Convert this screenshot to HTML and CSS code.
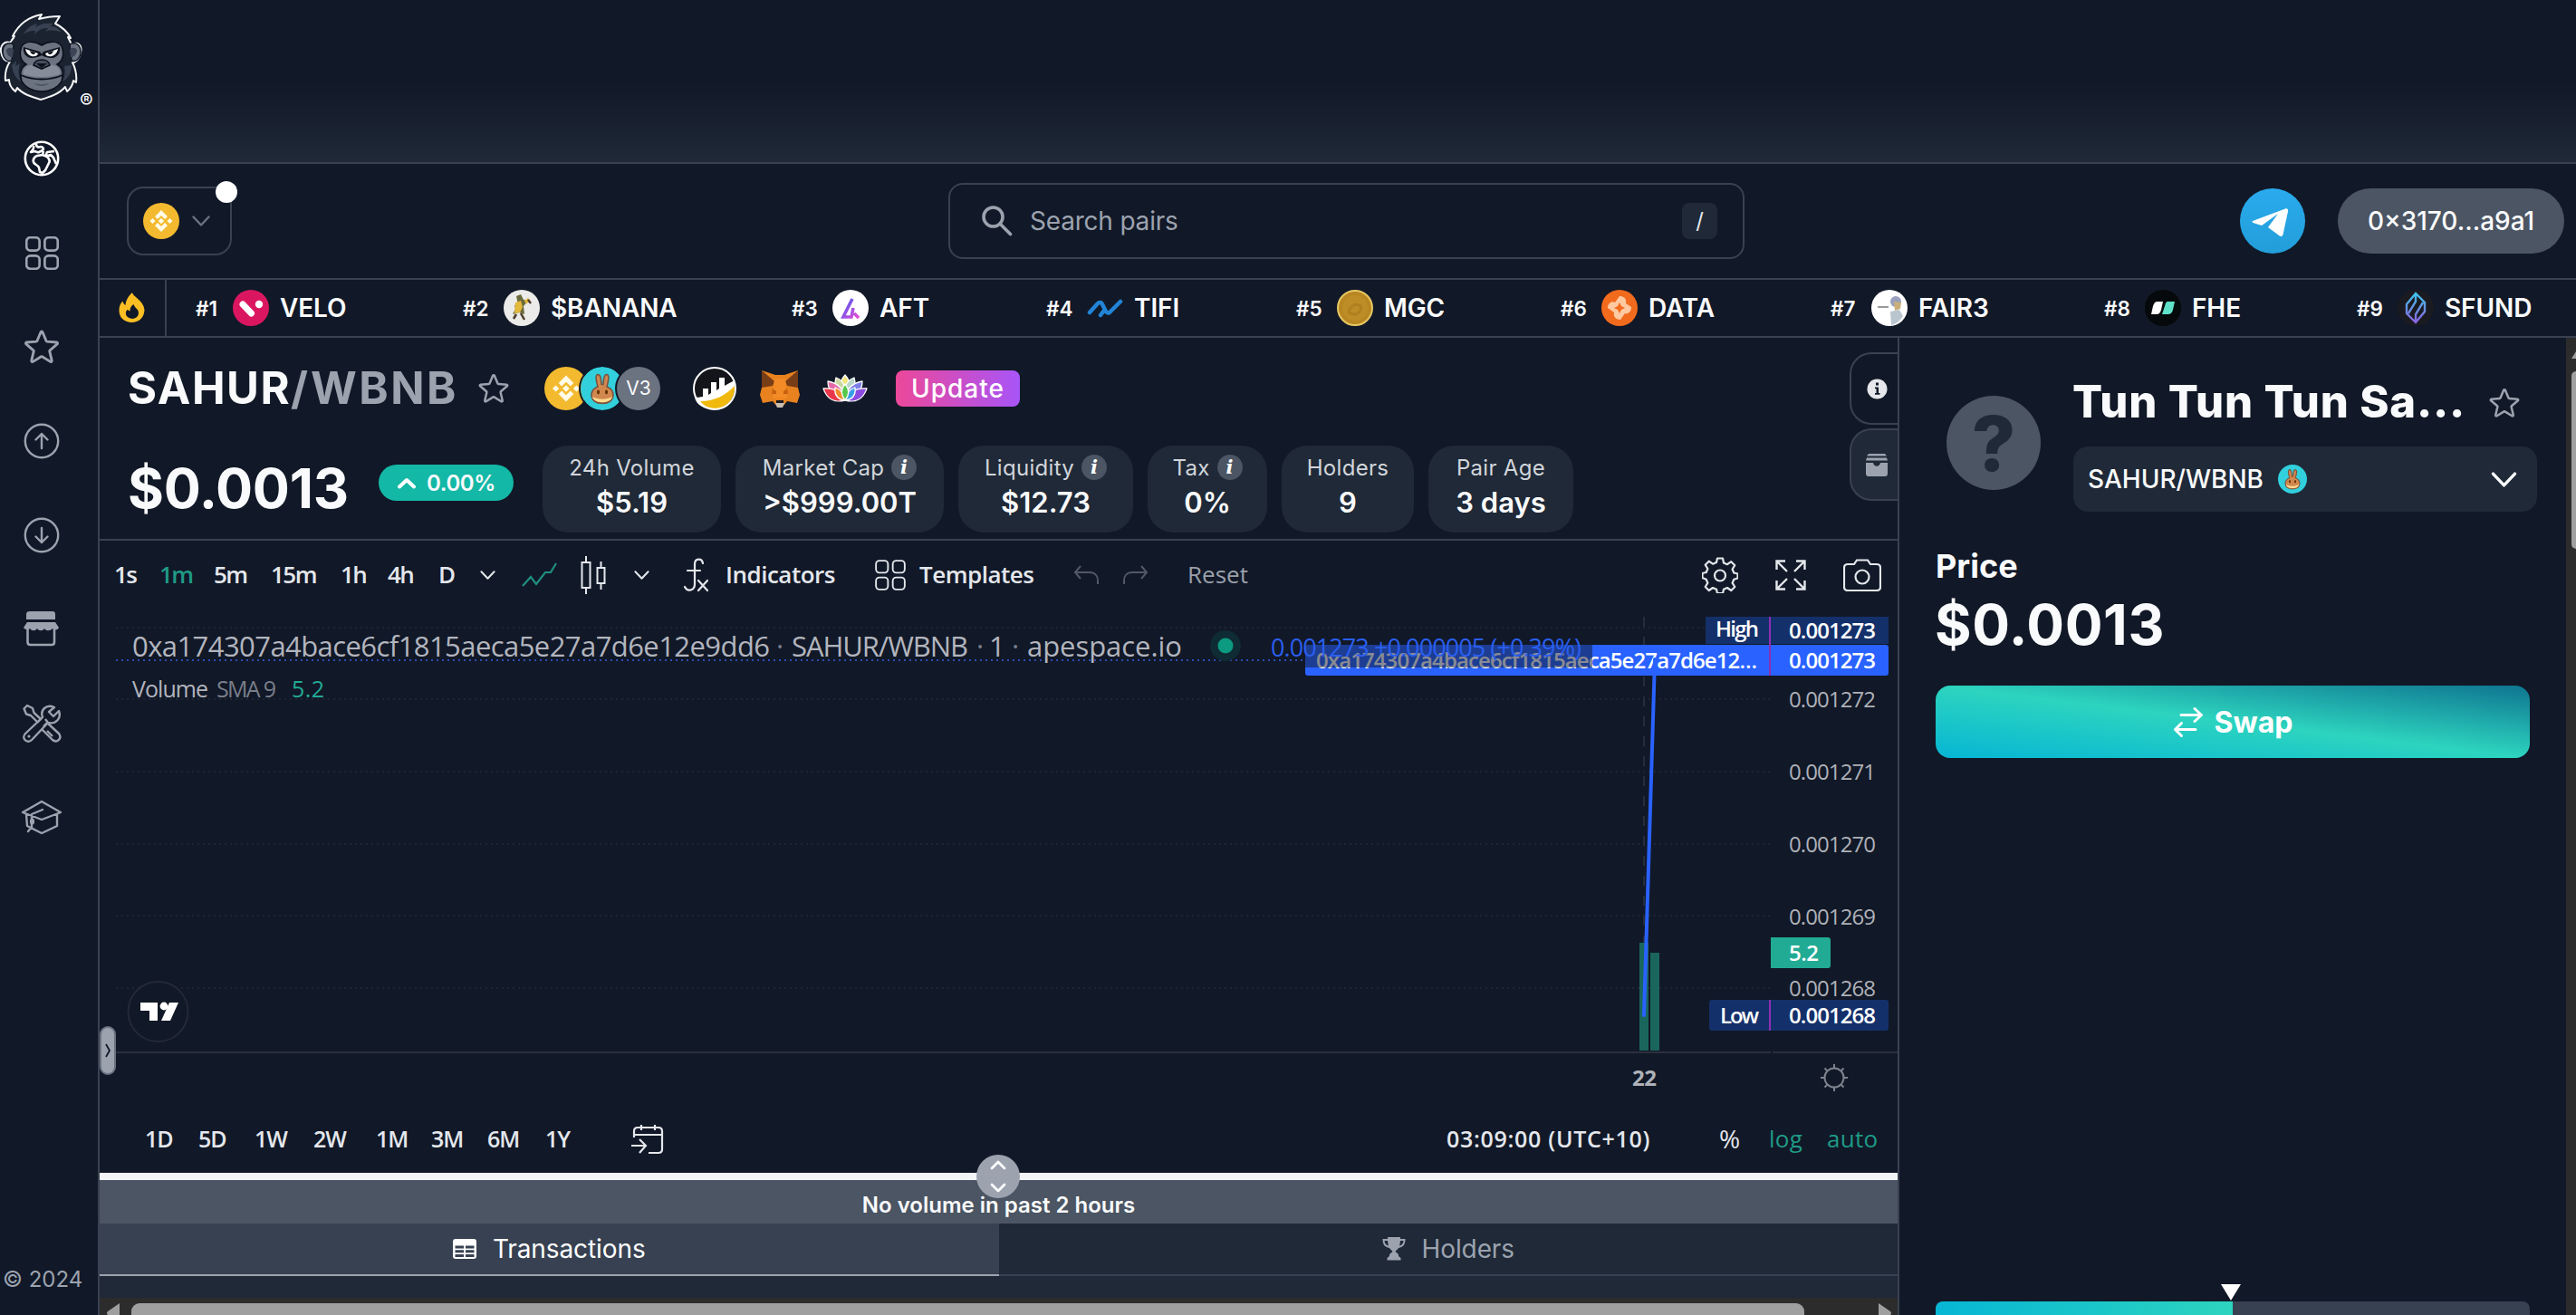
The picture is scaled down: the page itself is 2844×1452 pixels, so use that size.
FILE: index.html
```html
<!DOCTYPE html>
<html lang="en">
<head>
<meta charset="utf-8">
<title>SAHUR/WBNB $0.0013</title>
<link rel="stylesheet" href="styles.css">
</head>
<body>
<svg class="defs" aria-hidden="true">
  <symbol id="star" viewBox="0 0 24 24"><path fill="none" stroke="currentColor" stroke-width="1.5" stroke-linejoin="round" d="M11.48 3.499a.562.562 0 011.04 0l2.125 5.111a.563.563 0 00.475.345l5.518.442c.499.04.701.663.321.988l-4.204 3.602a.563.563 0 00-.182.557l1.285 5.385a.562.562 0 01-.84.61l-4.725-2.885a.563.563 0 00-.586 0L6.982 20.54a.562.562 0 01-.84-.61l1.285-5.386a.562.562 0 00-.182-.557l-4.204-3.602a.563.563 0 01.321-.988l5.518-.442a.563.563 0 00.475-.345L11.48 3.5z"/></symbol>
  <symbol id="chev" viewBox="0 0 20 12"><path fill="none" stroke="currentColor" stroke-width="2.4" stroke-linecap="round" stroke-linejoin="round" d="M1.5 1.5 10 10.5 18.500 1.500"/></symbol>
  <symbol id="bnb" viewBox="0 0 40 40"><circle cx="20" cy="20" r="20" fill="#f3ba2f"/><g fill="#fffbe6"><path d="m20 8 7 7-3 3-4-4-4 4-3-3zM20 32l7-7-3-3-4 4-4-4-3 3zM20 16.800l3.200 3.200-3.200 3.200-3.200-3.200zM10.500 17l3 3-3 3-3-3zM29.500 17l3 3-3 3-3-3z"/></g></symbol>
  <symbol id="cake" viewBox="0 0 48 48"><circle cx="24" cy="24" r="24" fill="#31d0dc"/><path fill="#d1884f" stroke="#7a5340" stroke-width="1.6" d="M19 22c-2-7-3-13 0-13.500 3-.3 3.600 5 4 11h2c.4-6 1-11.300 4-11 3 .5 2 6.500 0 13.500 5 2 7 5 7 9 0 6-5 9.500-12 9.500S12 37 12 31c0-4 2-7 7-9z"/><path fill="#fedc90" d="M13 33c1 4 5 6 11 6s10-2 11-6c-6 3.500-16 3.500-22 0z"/><ellipse cx="19.500" cy="28" rx="1.500" ry="2.400" fill="#633001"/><ellipse cx="28.500" cy="28" rx="1.500" ry="2.400" fill="#633001"/></symbol>
  <symbol id="quad" viewBox="0 0 36 36"><g fill="none" stroke="currentColor"><rect x="1.200" y="1.200" width="14" height="14" rx="4"/><rect x="20.800" y="1.200" width="14" height="14" rx="4"/><rect x="1.200" y="20.800" width="14" height="14" rx="4"/><rect x="20.800" y="20.800" width="14" height="14" rx="4"/></g></symbol>
</svg>

<div class="app">
  <nav class="sidebar">
    <div class="logo">
      <svg width="108" height="123" viewBox="0 0 108 123">
        <path fill="#1b2330" stroke="#f3f4f6" stroke-width="2" stroke-linejoin="round" d="M13 44l3-4-2 0c5-10 15-21 32-24l-3 5c7-2 15-3 23-3l-5 8c8 4 14 10 17 16l-3-1 4 8c8-4 12 2 10 9-1 6-5 11-9 11 3 6 5 14 4 22l-3-2c-1 6-3 9-7 12l-2-5c-7 8-17 11-27 14-10-3-20-6-26-13l-2 4c-5-4-7-8-7-13l-4 1c-1-9 1-15 5-21-6 0-9-5-10-11-1-7 4-12 10-10l4-5z"/>
        <g fill="#6b7280" stroke="#111827" stroke-width="1.500"><path d="M15 49c-6-3-12 0-12 8s6 12 10 10zM77 49c6-3 12 0 12 8s-6 12-10 10z"/></g>
        <path fill="#3b4555" d="M7 55c2-3 6-3 8 0l-1 8c-4 1-7-4-7-8zM85 55c-2-3-6-3-8 0l1 8c4 1 7-4 7-8z"/>
        <path fill="#374151" d="M26 38c3-7 8-10 15-12l-2 4c6-4 12-5 20-4l-4 3c6 0 9 2 13 7-7-3-13-3-18-1l3-4c-8 0-12 3-15 8l1-5c-6 0-9 1-13 4zM13 72l5-5-1 6 5-3c-2 7-2 13 1 20-6-4-9-10-10-18zM79 72c0 8-3 14-10 18 3-6 3-12 2-17z"/>
        <path fill="#6b7280" stroke="#0b101b" stroke-width="1.500" d="M46 50c8-5 18-5 22 1 3 8 2 16-5 20 7 4 7 10 5 19-5 8-12 11-22 11s-17-3-22-11c-2-9-2-15 5-19-7-4-8-12-5-20 4-6 14-6 22-1z"/>
        <path fill="#9ca3af" opacity=".55" d="M30 73c8-3 24-3 32 0 4 3 5 6 4 9-12 4-28 4-40 0-1-3 0-6 4-9z"/>
        <path fill="#0d121c" d="M26 52l18 5 2 3 2-3 18-5c1 6-2 11-8 12-6 0-10-2-12-3-2 1-6 3-12 3-6-1-9-6-8-12z"/>
        <path fill="#fff" d="M28 54l14 5c-1 5-12 5-14-5zM64 54l-14 5c1 5 12 5 14-5z"/>
        <path fill="#0d121c" d="M33 56l6 2c0 3-5 3-6-2zM59 56l-6 2c0 3 5 3 6-2z"/>
        <path fill="#454e5d" stroke="#0b101b" stroke-width="1.600" d="M37 72c2-8 16-8 18 0l-9 4z"/><path fill="#0b101b" d="M40 70h12l-6 5z"/>
        <path fill="none" stroke="#0b101b" stroke-width="1.800" d="M23 83c14 6 32 6 46 0"/><path fill="#4b5563" d="M38 92c5 1.500 11 1.500 16 0-3 4-13 4-16 0z"/>
        <text class="reg" x="88" y="119">®</text>
      </svg>
    </div>
    <a class="nav on"><svg width="42" height="42" viewBox="0 0 42 42"><g fill="none" stroke="currentColor" stroke-width="2.600" stroke-linejoin="round"><circle cx="21" cy="21" r="18.200"/><path d="M12 7c1 3-1 5-3 7l4-1c2 0 3 2 5 1l4-2c2-2 0-4-2-4-3 1-5 0-5-3M23 13l-1 4-6 1c-3 1-5 4-4 7s5 3 6 6l1 5 3 1 3-3 4-8c2-3 0-5-2-7l-5-2M37 27l-3-7-3-3-3 1-3-2M26 16l1-2 8-1"/></g></svg></a>
    <a class="nav"><svg width="37" height="37" stroke-width="2.600"><use href="#quad"/></svg></a>
    <a class="nav"><svg width="46" height="46"><use href="#star"/></svg></a>
    <a class="nav"><svg width="42" height="42" viewBox="0 0 42 42"><g fill="none" stroke="currentColor" stroke-width="2.400" stroke-linecap="round" stroke-linejoin="round"><circle cx="21" cy="21" r="18.200"/><path d="M21 29V13M14.500 19.500 21 13l6.500 6.500"/></g></svg></a>
    <a class="nav"><svg width="42" height="42" viewBox="0 0 42 42"><g fill="none" stroke="currentColor" stroke-width="2.400" stroke-linecap="round" stroke-linejoin="round"><circle cx="21" cy="21" r="18.200"/><path d="M21 13v16M14.500 22.500 21 29l6.500-6.500"/></g></svg></a>
    <a class="nav"><svg width="42" height="42" viewBox="0 0 42 42"><path fill="currentColor" d="M8 1h25q3 0 3 3v6H4V4q0-3 4-3zM5 13h31l4 6c-1 3-5 3-7 1-3 3-7 3-9 0-2 3-6 3-8 0-2 3-6 3-8 0-2 2-6 1-7-1z"/><path fill="none" stroke="currentColor" stroke-width="2.600" d="M5.500 20v15q0 3 3 3H32q3 0 3-3V20"/></svg></a>
    <a class="nav"><svg width="44" height="44" viewBox="0 0 44 44"><g fill="none" stroke="currentColor" stroke-width="2.400" stroke-linejoin="round"><path d="M2.500 5.500 6 2l6 3 1.500 5L21 17l-3.500 3.500L10 13l-5-1.500zM24 25l4-4 13 12c4 5-2 11-7 7L22 28M28 30l6 6"/><path d="M36 4c-9-4-16 3-13 11L4 33c-5 5 2 12 7 7l18-19c9 2 15-5 12-13l-6 6-5-5zM26 17l3 4"/></g><circle cx="8" cy="36" r="1.600" fill="currentColor"/></svg></a>
    <a class="nav"><svg width="46" height="42" viewBox="0 0 46 42"><g fill="none" stroke="currentColor" stroke-width="2.400" stroke-linejoin="round" stroke-linecap="round"><path d="M2 15 23 3l21 12-21 8zM6 17l1 13 16 8 17-8V17M24 12 12 17v14l-4 5"/></g><ellipse cx="12.500" cy="25" rx="2.600" ry="3.500" fill="currentColor"/></svg></a>
    <div class="copy">© 2024</div>
  </nav>

  <div class="page">
    <div class="banner"></div>
    <header class="top">
      <button class="net"><svg width="40" height="40"><use href="#bnb"/></svg><svg width="20" height="12"><use href="#chev"/></svg><i class="netdot"></i></button>
      <div class="search">
        <svg width="34" height="34" viewBox="0 0 34 34"><g fill="none" stroke="currentColor" stroke-width="3.600" stroke-linecap="round"><circle cx="12.500" cy="12.500" r="10.500"/><path d="M20.500 20.500 31.500 31.500"/></g></svg>
        <span>Search pairs</span><kbd>/</kbd>
      </div>
      <div class="acct">
        <svg width="72" height="72" viewBox="0 0 72 72"><defs><linearGradient id="tg" x2="0" y2="1"><stop stop-color="#2aabee"/><stop offset="1" stop-color="#229ed9"/></linearGradient></defs><circle cx="36" cy="36" r="36" fill="url(#tg)"/><path fill="#fff" d="M14 36 50 22.500c2-.7 3.400.4 3 3l-5.500 25.500c-.5 2-2 2.500-3.700 1.500L31 43l11-15-18 13-8-2.500c-3-.8-3-1.800-2-2.500z"/></svg>
        <button class="wallet">0×3170...a9a1</button>
      </div>
    </header>
    <div class="ticker">
      <div class="fire"><svg width="30" height="34" viewBox="0 0 30 34"><path fill="#fbbf24" fill-rule="evenodd" d="M15 0c1 5 13 9 13.500 19.500C28 28 22 33 14.500 33S.5 28 .5 20C.5 15 2 12 4.500 9.500 5 12 6 13 7.500 14 8 8 11 4 15 0zM16.500 13c-3 2-4 4-4 7.500L9.500 19c-2.500 2-3 9 5.500 10 7-.5 8.500-7 5.500-10.500-2-2-3-3-4-5.500z"/></svg></div>
      <div class="tokens">
        <div class="tok"><small>#1</small><svg width="40" height="40" viewBox="0 0 40 40"><circle cx="20" cy="20" r="20" fill="#db1660"/><path stroke="#fff" stroke-width="7" stroke-linecap="round" d="M11 16l9.500 10"/><circle cx="29" cy="16" r="4.200" fill="#fff"/></svg><b>VELO</b></div>
        <div class="tok"><small>#2</small><svg width="40" height="40" viewBox="0 0 40 40"><circle cx="20" cy="20" r="20" fill="#ebebe9"/><path fill="#6b6a3a" d="M14 7l5-2 3 6 5 1-5 6 1 9-6-2-7 2 3-6-1-4 4-1z"/><path fill="#e3b93c" d="M13 14l6-2 2 7-3 6-6 1zM23 12l4-3 2 2-4 5z"/><path stroke="#4c3b2b" stroke-width="2.500" d="M14 27l-3 5M19 26l4 7M27 11l3 4" fill="none"/></svg><b>$BANANA</b></div>
        <div class="tok"><small>#3</small><svg width="40" height="40" viewBox="0 0 40 40"><defs><linearGradient id="af" x2="1" y2="1"><stop stop-color="#4b5bf0"/><stop offset="1" stop-color="#e94bd8"/></linearGradient></defs><circle cx="20" cy="20" r="20" fill="#fff"/><path fill="none" stroke="url(#af)" stroke-width="3.600" d="M22 10 12 30h9l2-10M24 26l5 5"/></svg><b>AFT</b></div>
        <div class="tok"><small>#4</small><svg width="40" height="40" viewBox="0 0 40 40"><path fill="none" stroke="#2184d6" stroke-width="4.500" stroke-linecap="round" stroke-linejoin="round" d="M3 25l9-10c2-2 4-1 5 1l3 6c1 3 4 5 6 2l11-11M15 28l3-4"/></svg><b>TIFI</b></div>
        <div class="tok"><small>#5</small><svg width="40" height="40" viewBox="0 0 40 40"><circle cx="20" cy="20" r="19" fill="#b98722" stroke="#e6c763" stroke-width="2"/><circle cx="20" cy="20" r="14" fill="#be8d27"/><path fill="none" stroke="#b08020" stroke-width="3" d="M13 25c2-10 12-11 14-5-2 7-8 9-14 5z"/></svg><b>MGC</b></div>
        <div class="tok"><small>#6</small><svg width="40" height="40" viewBox="0 0 40 40"><circle cx="20" cy="20" r="20" fill="#f26b1d"/><path fill="#ffc9a1" d="M20 7c5 0 8 3 7 8l6 4c0 6-4 8-7 7l-5 7c-5 0-8-3-7-8l-7-5c0-5 4-8 8-6z"/><path fill="#f26b1d" d="M20 14l2 4 4 2-4 2-2 4-2-4-4-2 4-2z"/></svg><b>DATA</b></div>
        <div class="tok"><small>#7</small><svg width="40" height="40" viewBox="0 0 40 40"><circle cx="20" cy="20" r="20" fill="#fff"/><circle cx="27" cy="13" r="6" fill="#9aa0bd"/><path fill="#c9b07a" d="M25 13l8 1-1 7-6 2z"/><path fill="#b9c6d0" d="M21 24l10-2 4 7c-4 6-8 9-13 10z"/><path stroke="#9a9a9a" stroke-width="2" d="M7 19h12"/></svg><b>FAIR3</b></div>
        <div class="tok"><small>#8</small><svg width="40" height="40" viewBox="0 0 40 40"><circle cx="20" cy="20" r="20" fill="#06090b"/><path fill="#fff" d="M14 13h6l-2 9c-1 4-3 5-5 5H7l2-9c1-3 2-5 5-5z"/><path fill="#5fe0c8" d="M26 13h7l-2 9c-1 4-3 5-6 5h-6l3-9c1-3 1-5 4-5z"/></svg><b>FHE</b></div>
        <div class="tok"><small>#9</small><svg width="40" height="40" viewBox="0 0 40 40"><defs><linearGradient id="sf" x2="0" y2="1"><stop stop-color="#3fc3e8"/><stop offset="1" stop-color="#8a63e0"/></linearGradient></defs><circle cx="20" cy="20" r="20" fill="#1a1a21"/><path fill="none" stroke="url(#sf)" stroke-width="2.400" d="M20 4 10 16v10l10 10 10-12V14zM20 4v9l-8 13M20 36v-9l8-13"/></svg><b>SFUND</b></div>
      </div>
    </div>

    <div class="body">
      <main class="main">
        <section class="pair">
          <div class="row1">
            <h1><span>SAHUR</span>/WBNB</h1>
            <svg class="fav" width="40" height="40"><use href="#star"/></svg>
            <div class="stack"><svg width="48" height="48"><use href="#bnb"/></svg><svg width="48" height="48"><use href="#cake"/></svg><span class="v3">V3</span></div>
            <svg class="lg" width="48" height="48" viewBox="0 0 48 48"><circle cx="24" cy="24" r="23" fill="#14151a"/><path fill="#fff" d="M2 34c5 0 7-1 9-1V24h6v7l3-2V17h6v9l3-2V12h6v9q5-3 11-6c1 16-9 32-22 32C12 47 4 42 2 34z"/><path fill="#f0b90b" d="M8 38c15 0 28-6 38-17 1 13-8 25-21 25-8 0-13-3-17-8z"/><circle cx="24" cy="24" r="23" fill="none" stroke="#fff" stroke-width="2"/></svg>
            <svg class="fox" width="46" height="42" viewBox="0 0 46 42"><path fill="#e8821e" d="M3 1l15 5h10L43 1l-1 15 3 12-3 9-11-2-5 6h-6l-5-6-11 2-3-9 3-12z"/><path fill="#773d16" d="M3 1l14 12-2 5L3 20zM43 1 29 13l2 5 12 2z"/><path fill="#f28a26" d="M17 10h12l2 22H15z"/><path fill="#c4600f" d="M15 21l4 3v3h-5zM31 21l-4 3v3h5z"/><path fill="#1b1b1f" d="M19 34h8v4h-8z"/><path fill="#c9bdb2" d="M18 37h10l-2 5h-6z"/></svg>
            <svg class="lotus" width="50" height="32" viewBox="0 0 50 32"><g stroke="#fff" stroke-width="1.300" stroke-linejoin="round"><path fill="#f2e67c" d="M25 1c7 8 7 18 0 28-7-10-7-20 0-28z"/><path fill="#c9d8a0" d="M15 4c9 3 12 11 10 25-9-6-13-14-10-25z"/><path fill="#b9d6c8" d="M35 4c3 11-1 19-10 25-2-14 1-22 10-25z"/><path fill="#e56aa8" d="M6 8c12 2 18 9 19 21C14 27 6 20 6 8z"/><path fill="#7d7fe8" d="M44 8c0 12-8 19-19 21 1-12 7-19 19-21z"/><path fill="#e8374a" d="M1 16c11-1 19 3 24 13-11 3-20-1-24-13z"/><path fill="#8b4be0" d="M49 16c-4 12-13 16-24 13 5-10 13-14 24-13z"/><path fill="#f08a2c" d="M14 15c7 2 10 7 11 14-8-1-12-6-11-14z"/><path fill="#3aa0e8" d="M36 15c1 8-3 13-11 14 1-7 4-12 11-14z"/><path fill="#57c84d" d="M25 11c5 6 5 12 0 18-5-6-5-12 0-18z"/></g></svg>
            <a class="update">Update</a>
          </div>
          <div class="row2">
            <div class="price">$0.0013</div>
            <div class="chg"><svg width="22" height="13" viewBox="0 0 22 13"><path fill="none" stroke="#fff" stroke-width="4" stroke-linecap="round" stroke-linejoin="round" d="M3 10.500 11 3l8 7.500"/></svg>0.00%</div>
            <div class="stats">
              <div class="stat"><label>24h Volume</label><b>$5.19</b></div>
              <div class="stat"><label>Market Cap<i>i</i></label><b>&gt;$999.00T</b></div>
              <div class="stat"><label>Liquidity<i>i</i></label><b>$12.73</b></div>
              <div class="stat"><label>Tax<i>i</i></label><b>0%</b></div>
              <div class="stat"><label>Holders</label><b>9</b></div>
              <div class="stat"><label>Pair Age</label><b>3 days</b></div>
            </div>
          </div>
          <div class="sidetabs">
            <a class="st"><svg width="23" height="23" viewBox="0 0 23 23"><circle cx="11.500" cy="11.500" r="11" fill="#e5e7eb"/><path fill="#111827" d="M10 4.500h3v3h-3zM9 9.500h4V16h1.500v1.800H9V16h1.500v-4.700H9z"/></svg></a>
            <a class="st alt"><svg width="26" height="25" viewBox="0 0 26 25"><path fill="#9ca3af" d="M4 0h18l2 2.600H2zM2 4.500h22l1 3H1zM1 10h8c1 5 7 5 8 0h8v12q0 3-3 3H4q-3 0-3-3z"/></svg></a>
          </div>
        </section>

        <div class="toolbar">
          <span class="n">1s</span><span class="n on">1m</span><span class="n">5m</span><span class="n">15m</span><span class="n">1h</span><span class="n">4h</span><span>D</span>
          <svg width="17" height="10"><use href="#chev"/></svg>
          <svg width="40" height="34" viewBox="0 0 40 34"><path fill="none" stroke="#1f8f80" stroke-width="2.200" d="M1 29 10 19l6 8 10-13h6l6-10"/></svg>
          <svg width="28" height="42" viewBox="0 0 28 42"><path fill="none" stroke="currentColor" stroke-width="2" d="M1.500 7h9v28h-9zM6 0v7M6 35v7M18.500 13h8v17h-8zM22.500 6v7M22.500 30v7"/></svg>
          <svg width="17" height="10"><use href="#chev"/></svg>
          <svg width="28" height="38" viewBox="0 0 28 38"><path fill="none" stroke="currentColor" stroke-width="2.200" stroke-linecap="round" d="M22 6c-1-6-9-6-9 1v22c0 7-8 9-11 3M5 14h14M17 25l10 11M27 25 17 36"/></svg>
          <span>Indicators</span>
          <svg width="34" height="34" stroke-width="2"><use href="#quad"/></svg>
          <span>Templates</span>
          <svg class="dim" width="28" height="22" viewBox="0 0 28 22"><path fill="none" stroke="currentColor" stroke-width="2" d="M8 1 2 8l6 7M2 8h16c6 0 9 4 9 9v4"/></svg>
          <svg class="dim" width="28" height="22" viewBox="0 0 28 22"><path fill="none" stroke="currentColor" stroke-width="2" d="M20 1l6 7-6 7M26 8H10c-6 0-9 4-9 9v4"/></svg>
          <span class="reset">Reset</span>
          <div class="tools">
            <svg width="40" height="40" viewBox="0 0 40 40"><g fill="none" stroke="currentColor" stroke-width="2.200" stroke-linejoin="round"><path d="M17 1.500h6l1 5 4 1.700 4.300-3 4 4-2.700 4.300 1.700 4 4.200 1v5l-4.200 1.200-1.700 4 2.700 4.300-4 4-4.300-3-4 1.700-1 4.300h-6l-1-4.300-4-1.700-4.300 3-4-4 2.700-4.300-1.700-4L.500 23v-5l4.200-1 1.700-4-2.700-4.300 4-4 4.300 3 4-1.700z"/><circle cx="20" cy="20.500" r="6"/></g></svg>
            <svg width="34" height="34" viewBox="0 0 34 34"><path fill="none" stroke="currentColor" stroke-width="2.400" d="M1.500 11V1.500H11M1.500 1.500 13 13M23 1.500h9.500V11M32.500 1.500 21 13M1.500 23v9.500H11M1.500 32.500 13 21M32.500 23v9.500H23M32.500 32.500 21 21"/></svg>
            <svg width="42" height="36" viewBox="0 0 42 36"><g fill="none" stroke="currentColor" stroke-width="2.200"><path d="M5 6h7l3-4.500h12L30 6h7q4 0 4 4v21q0 4-4 4H5q-4 0-4-4V10q0-4 4-4z"/><circle cx="21" cy="20" r="7.500"/></g></svg>
          </div>
        </div>

        <div class="chart">
          <svg width="1986" height="542" viewBox="110 673 1986 542">
            <g stroke="#1e2533" stroke-width="2" stroke-dasharray="2 4"><path d="M128 693H1954M128 772H1954M128 852H1954M128 932H1954M128 1011H1954M128 1091H1954"/></g>
            <path stroke="#252c3a" stroke-width="2" stroke-dasharray="11 11" d="M1815 681V1160"/>
            <path stroke="#2d4bb8" stroke-width="2" stroke-dasharray="2 4" d="M128 729H1441"/>
            <path fill="#1a665d" d="M1810 1041h10v119h-10zM1822 1052h10v108h-10z"/>
            <path fill="#2a2f3c" d="M128 1161h1827v2H128zM1957 1161h139v2h-139z"/>
            <g class="axis">
              <text x="1975" y="781" textLength="96">0.001272</text><text x="1975" y="861" textLength="96">0.001271</text><text x="1975" y="941" textLength="96">0.001270</text><text x="1975" y="1021" textLength="96">0.001269</text><text x="1975" y="1100" textLength="96">0.001268</text>
              <text class="bold" x="1802" y="1199" textLength="27">22</text>
            </g>
            <path fill="#14306a" d="M1883 681h202v30h-202z"/><rect x="1887" y="1104" width="198" height="34" rx="3" fill="#14306a"/>
            <rect x="1441" y="712" width="644" height="34" rx="3" fill="#2962ff"/>
            <path fill="#22ab94" d="M1955 1035h63q3 0 3 3v28q0 3-3 3h-63z"/>
            <path stroke="#8f2fb0" stroke-width="2" d="M1954 681v65M1954 1104v34"/>
            <g class="tag">
              <text x="1894" y="703" textLength="48">High</text><text x="1975" y="705" textLength="96">0.001273</text>
              <text x="1453" y="738" textLength="487">0xa174307a4bace6cf1815aeca5e27a7d6e12…</text><text x="1975" y="738" textLength="96">0.001273</text>
              <text x="1975" y="1061" textLength="33">5.2</text>
              <text x="1899" y="1130" textLength="43">Low</text><text x="1975" y="1130" textLength="96">0.001268</text>
            </g>
            <path stroke="#2962ff" stroke-width="4" stroke-linecap="round" d="M1815 1121 1827 728"/>
            <path fill="#111827" opacity=".5" d="M1441 712h317v25h-317z"/>
            <g class="legend">
              <text x="146" y="725" textLength="704">0xa174307a4bace6cf1815aeca5e27a7d6e12e9dd6</text><text class="mid" x="857" y="725">·</text>
              <text x="874" y="725" textLength="195">SAHUR/WBNB</text><text class="mid" x="1078" y="725">·</text><text x="1092" y="725" textLength="16">1</text><text class="mid" x="1117" y="725">·</text><text x="1134" y="725" textLength="171">apespace.io</text>
              <text class="val" x="1403" y="725" textLength="343">0.001273 +0.000005 (+0.39%)</text>
              <text class="vol" x="146" y="770" textLength="84">Volume</text><text class="vol mid" x="239" y="770" textLength="66">SMA 9</text><text class="vol grn" x="322" y="770" textLength="36">5.2</text>
            </g>
            <circle cx="1353" cy="713" r="17" fill="#0f2b33"/><circle cx="1353" cy="713" r="8.500" fill="#0c9a80"/>
            <circle cx="174.500" cy="1117" r="33" fill="#111827" stroke="#232938" stroke-width="2"/>
            <path fill="#fff" d="M155 1107h19v20h-9v-11h-10z"/><circle cx="181" cy="1111" r="4.400" fill="#fff"/><path fill="#fff" d="M187 1107h10l-9 20h-10z"/>
            <g fill="none" stroke="#7d828d" stroke-width="2"><circle cx="2025" cy="1190" r="10.500"/><path d="M2025 1175v4M2025 1201v4M2010 1190h4M2036 1190h4M2014.500 1179.500l3 3M2032.500 1197.500l3 3M2035.500 1179.500l-3 3M2017.500 1197.500l-3 3"/></g>
          </svg>
        </div>

        <div class="ranges">
          <span>1D</span><span>5D</span><span>1W</span><span>2W</span><span>1M</span><span>3M</span><span>6M</span><span>1Y</span>
          <svg width="36" height="34" viewBox="0 0 36 34"><path fill="none" stroke="currentColor" stroke-width="2.200" d="M3 15V8q0-4 4-4h23q4 0 4 4v20q0 4-4 4H19M3 12h31M11 1v6M26 1v6M0 24h15M9 17l7 7-7 8"/></svg>
          <span class="time">03:09:00 (UTC+10)</span><span class="pct">%</span><span class="on">log</span><span class="on">auto</span>
        </div>

        <section class="bottom">
          <div class="volbar">No volume in past 2 hours</div>
          <div class="tabs">
            <a class="tab on"><svg width="26" height="22" viewBox="0 0 26 22"><rect width="26" height="22" rx="3" fill="currentColor"/><path fill="#374151" d="M2.500 7.500H12v3H2.500zM14 7.500h9.500v3H14zM2.500 12.300H12v3H2.500zM14 12.300h9.500v3H14zM2.500 17H12v3H2.500zM14 17h9.500v3H14z"/></svg>Transactions</a>
            <a class="tab"><svg width="26" height="26" viewBox="0 0 26 26"><path fill="currentColor" fill-rule="evenodd" d="M6 0h14v2h5.500c0 6-2 9-7.500 10-1 2-3 2.500-3.500 4L18 19v2l2.500 2v2.500H5.500V23L8 21v-2l3.500-3C11 14.500 9 14 8 12 2.500 11 .5 8 .5 2H6zM2.500 4c.3 3 1.500 4.700 4.300 5.500L6 4zM20 4l-.8 5.500C22 8.700 23.200 7 23.500 4z"/></svg>Holders</a>
          </div>
          <div class="gap"></div>
          <div class="hscroll"><svg width="16" height="22" viewBox="0 0 16 22"><path fill="#9f9f9f" d="M14 0v22L1 13q-2-2 0-4z"/></svg><i></i><svg width="16" height="22" viewBox="0 0 16 22"><path fill="#9f9f9f" d="M2 0v22l13-9q2-2 0-4z"/></svg></div>
          <div class="grip"><svg width="18" height="36" viewBox="0 0 18 36"><path fill="none" stroke="#fff" stroke-width="2.800" stroke-linecap="round" stroke-linejoin="round" d="M2 9l7-7 7 7M2 27l7 7 7-7"/></svg></div>
        </section>
        <div class="sidegrip"><svg width="8" height="16" viewBox="0 0 8 16"><path fill="none" stroke="#111827" stroke-width="1.800" d="M2 1l4 7-4 7"/></svg></div>
      </main>

      <aside class="panel">
        <div class="token">
          <div class="q">?</div>
          <div class="tinfo">
            <div class="tname"><h2>Tun Tun Tun Sa...</h2><svg width="40" height="40"><use href="#star"/></svg></div>
            <div class="sel">SAHUR/WBNB<svg width="32" height="32"><use href="#cake"/></svg><svg class="end" width="29" height="17"><use href="#chev"/></svg></div>
          </div>
        </div>
        <div class="plabel">Price</div>
        <div class="pval">$0.0013</div>
        <button class="swap"><svg width="34" height="34" viewBox="0 0 34 34"><path fill="none" stroke="#fff" stroke-width="3" stroke-linecap="round" stroke-linejoin="round" d="M9 9.500h22M24 2.500l7.500 7-7.500 7M25 25.500H3M9.500 18.500l-7 7 7 7"/></svg>Swap</button>
        <div class="prog"><svg width="22" height="18" viewBox="0 0 22 18"><path fill="#fff" d="M0 0h22L11 18z"/></svg><div class="track"><i></i></div></div>
      </aside>
      <div class="vscroll"><svg width="5" height="8" viewBox="0 0 5 8"><path fill="#9f9f9f" d="M5 0v8H0z"/></svg><i></i></div>
    </div>
  </div>
</div>
</body>
</html>
```
FILE: styles.css
```css
* { box-sizing: border-box; }
body { margin: 0; background: #111827; color: #f9fafb; font-family: Inter, "Liberation Sans", sans-serif; overflow: hidden; }
svg { display: block; flex: none; }
button { margin: 0; border: 0; font: inherit; color: inherit; }
h1, h2 { margin: 0; }
.defs { position: absolute; width: 0; height: 0; }
.app { display: flex; width: 2844px; height: 1452px; overflow: hidden; }

.sidebar { width: 110px; flex: none; display: flex; flex-direction: column; border-right: 2px solid #3a4150; color: #9ca3af; }
.logo { height: 123px; }
.reg { font-size: 22px; fill: #fff; }
.nav { width: 92px; height: 104px; display: flex; align-items: center; justify-content: center; }
.nav.on { color: #fff; }
.copy { margin-top: auto; padding: 0 0 23px 3px; font-size: 24px; line-height: 32px; letter-spacing: 0; white-space: nowrap; }

.page { flex: 1; min-width: 0; display: flex; flex-direction: column; }
.banner { height: 181px; border-bottom: 2px solid #3a4150; background: linear-gradient(#111827 50%, #1f2937); }
.top { height: 128px; border-bottom: 2px solid #3a4150; display: grid; grid-template-columns: 907px 879px 1fr; align-items: center; padding: 0 13px 0 30px; }
.net { position: relative; width: 116px; height: 76px; border: 2px solid #3a4150; border-radius: 18px; background: none; display: flex; align-items: center; gap: 14px; padding: 0 0 0 16px; color: #6b7280; }
.netdot { position: absolute; right: -8px; top: -8px; width: 24px; height: 24px; border-radius: 50%; background: #fff; }
.search { height: 84px; border: 2px solid #3a4150; border-radius: 16px; display: flex; align-items: center; padding: 0 28px 0 35px; font-size: 28px; color: #9ca3af; }
.search span { margin-left: 19px; letter-spacing: -.2px; }
.search kbd { margin-left: auto; width: 39px; height: 40px; border-radius: 8px; background: #1f2937; color: #e5e7eb; font: 24px/40px Inter, sans-serif; text-align: center; }
.acct { display: flex; justify-content: flex-end; align-items: center; gap: 36px; }
.wallet { width: 250px; height: 72px; border-radius: 36px; background: #4b5563; font-size: 28px; font-weight: 500; padding: 0; }

.ticker { height: 64px; border-bottom: 2px solid #3a4150; display: flex; }
.fire { width: 74px; border-right: 2px solid #3a4150; display: flex; align-items: center; justify-content: center; }
.tokens { display: grid; grid-template-columns: 295px 363px 281px 276px 292px 298px 302px 279px 200px; padding-left: 32px; align-items: center; }
.tok { display: flex; align-items: center; white-space: nowrap; }
.tok small { width: 29px; margin-right: 12px; font-size: 22.500px; font-weight: 600; }
.tok:nth-child(n+2) small { width: 32px; margin-right: 13px; }
.tok b { margin-left: 12px; font-size: 28px; font-weight: 600; letter-spacing: -.1px; }

.body { flex: 1; min-height: 0; display: flex; }
.main { position: relative; width: 1987px; flex: none; border-right: 2px solid #3a4150; display: flex; flex-direction: column; overflow: hidden; }
.pair { position: relative; height: 224px; border-bottom: 2px solid #3a4150; padding-left: 31px; }
.row1 { height: 112px; display: flex; align-items: center; }
.row1 h1 { width: 384px; margin-top: -2px; font-size: 49px; font-weight: 700; letter-spacing: 2.500px; color: #9ca3af; white-space: nowrap; }
.row1 h1 span { color: #f9fafb; letter-spacing: 1.500px; }
.fav { color: #9ca3af; }
.stack { display: flex; margin-left: 36px; }
.stack > * + * { margin-left: -8px; }
.stack > :nth-child(n+2) { border-radius: 50%; box-shadow: 0 0 0 2px #111827; }
.v3 { width: 48px; height: 48px; background: #6b7280; text-align: center; font-size: 21px; line-height: 48px; }
.lg { margin-left: 36px; }
.fox { margin-left: 25px; }
.lotus { margin-left: 24px; }
.update { margin-left: 31px; width: 137px; height: 40px; border-radius: 8px; background: linear-gradient(90deg, #ec4899, #a855f7); font-size: 28px; font-weight: 500; letter-spacing: 1px; line-height: 40px; text-align: center; color: #fff; }
.row2 { display: flex; align-items: center; height: 110px; }
.price { width: 277px; margin-top: -3px; font-size: 61px; font-weight: 700; letter-spacing: -.3px; }
.chg { width: 149px; height: 40px; border-radius: 20px; background: #14b8a6; display: flex; align-items: center; justify-content: center; gap: 11px; font-size: 24px; font-weight: 600; letter-spacing: -.4px; margin-top: -14px; }
.stats { margin-left: 32px; display: grid; grid-template-columns: 197px 230px 193px 132px 146px 160px; gap: 16px; }
.stat { height: 96px; border-radius: 28px; background: #1f2937; display: flex; flex-direction: column; align-items: center; padding-top: 8px; white-space: nowrap; }
.stat label { display: flex; align-items: center; height: 32px; font-size: 24px; letter-spacing: .3px; color: #d1d5db; }
.stat i { width: 28px; height: 28px; margin-left: 8px; border-radius: 50%; background: #4b5563; color: #fff; font: italic bold 21px/27px "DejaVu Serif", serif; text-align: center; }
.stat b { font-size: 31px; font-weight: 600; line-height: 46px; letter-spacing: 0; }
.sidetabs { position: absolute; right: -1px; top: 16px; display: flex; flex-direction: column; gap: 4px; }
.st { width: 54px; height: 80px; border: 2px solid #3a4150; border-right: 0; border-radius: 24px 0 0 24px; display: flex; align-items: center; justify-content: center; padding-left: 4px; }
.alt { background: #1f2937; }

.toolbar { height: 76px; padding: 0 18px 0 17px; display: grid; grid-template-columns: 50px 60px 63px 77px 52px 55px 46px 46px 65px 59px 54px 47px 165px 49px 170px 55px 71px 1fr auto; align-items: center; color: #e4e7ec; font: 600 26px "Open Sans", sans-serif; letter-spacing: -.5px; white-space: nowrap; }
.toolbar > span { margin-top: -3px; }
.toolbar .n { letter-spacing: -1.5px; margin-left: -1px; }
.on { color: #1f9a86; }
.toolbar svg { justify-self: start; }
.dim { color: #525866; }
.toolbar .reset { color: #9aa0ab; font-weight: 500; letter-spacing: 0; }
.tools { display: flex; align-items: center; gap: 41px; }
.chart { height: 542px; }
.chart svg { width: 1986px; }
.chart text { font-family: "Open Sans", sans-serif; }
.axis text { font-size: 24px; font-weight: 500; fill: #aeb1b8; }
.axis .bold { font-weight: 700; }
.tag text { font-size: 24px; fill: #fff; font-weight: 600; }
.legend text { font-size: 31px; fill: #b2b5be; }
.legend .mid { fill: #797e89; }
.legend .val { font-size: 27px; fill: #2a5ff0; }
.legend .vol { font-size: 25px; }
.legend .grn { fill: #22ab94; font-weight: 500; }

.ranges { height: 80px; padding: 3px 0 0 50px; display: grid; grid-template-columns: 59px 62px 65px 69px 61px 62px 64px 95px 900px 301px 55px 64px 1fr; align-items: center; font: 600 25px "Open Sans", sans-serif; letter-spacing: -1.1px; color: #e4e7ec; white-space: nowrap; }
.ranges svg { margin-top: 3px; }
.ranges .time { letter-spacing: .7px; }
.ranges .on { font-size: 26px; font-weight: 500; letter-spacing: .3px; }
.ranges .pct { font-size: 28px; font-weight: 400; }

.bottom { position: relative; flex: 1; min-height: 0; border-top: 8px solid #f3f4f6; display: flex; flex-direction: column; background: #1f2937; }
.volbar { height: 48px; background: #4b5563; text-align: center; font-size: 24px; font-weight: 600; line-height: 56px; }
.tabs { display: flex; height: 58px; flex: none; }
.tab { flex: 1; display: flex; align-items: center; justify-content: center; gap: 18px; font-size: 28px; color: #9ca3af; border-bottom: 2px solid #374151; letter-spacing: -.1px; }
.tab.on { color: #fff; background: #374151; border-color: #9ca3af; }
.gap { height: 24px; flex: none; }
.hscroll { flex: 1; background: #2c2c2c; display: flex; align-items: flex-start; padding: 6px 7px 0 8px; overflow: hidden; }
.hscroll i { height: 22px; width: 1847px; border-radius: 9px; background: #9f9f9f; margin: 0 auto 0 11px; }
.grip { position: absolute; left: 968px; top: -28px; width: 48px; height: 48px; border-radius: 50%; background: #9ca3af; display: flex; align-items: center; justify-content: center; }
.sidegrip { position: absolute; left: 0; top: 760px; width: 18px; height: 54px; border-radius: 9px; border: 2px solid #6b7280; background: #9ca3af; display: flex; align-items: center; justify-content: center; }

.panel { width: 736px; flex: none; padding: 40px 32px 0 40px; display: flex; flex-direction: column; }
.token { display: flex; align-items: center; height: 152px; }
.q { width: 104px; height: 104px; margin: 0 36px 0 12px; border-radius: 50%; background: #4b5563; color: #1f2937; font-size: 84px; font-weight: 800; line-height: 106px; text-align: center; }
.tinfo { width: 512px; }
.tname { display: flex; align-items: center; justify-content: space-between; height: 64px; padding-right: 16px; }
.tname h2 { margin: -3px 0 0 -1px; font-size: 49px; font-weight: 800; letter-spacing: .8px; white-space: nowrap; }
.tname svg { color: #9ca3af; }
.sel { margin-top: 16px; height: 72px; border-radius: 16px; background: #1f2937; display: flex; align-items: center; padding: 0 22px 0 16px; font-size: 28px; font-weight: 500; }
.sel svg { margin-left: 16px; }
.sel .end { margin-left: auto; }
.plabel { margin-top: 38px; font-size: 36px; font-weight: 700; line-height: 44px; }
.pval { margin: 7px 0 0 -1px; font-size: 62px; font-weight: 700; letter-spacing: .6px; line-height: 72px; }
.swap { width: 656px; height: 80px; margin-top: 31px; border-radius: 16px; background: linear-gradient(to top right, #06b6d4, #2dd4bf, #0e7490); display: flex; align-items: center; justify-content: center; gap: 12px; font-size: 32px; font-weight: 700; color: #fff; flex: none; }
.prog { width: 656px; margin-top: auto; }
.prog svg { margin-left: 315px; margin-bottom: 1px; }
.track { height: 15px; border-radius: 8px 8px 0 0; background: #374151; overflow: hidden; }
.track i { display: block; width: 328px; height: 15px; background: linear-gradient(90deg, #06b6d4, #2dd4bf); }
.vscroll { flex: 1; background: #2c2c2c; display: flex; flex-direction: column; align-items: flex-end; padding-top: 15px; }
.vscroll i { width: 5px; height: 196px; margin-top: 14px; background: #9f9f9f; border-radius: 5px 0 0 5px; }
```
